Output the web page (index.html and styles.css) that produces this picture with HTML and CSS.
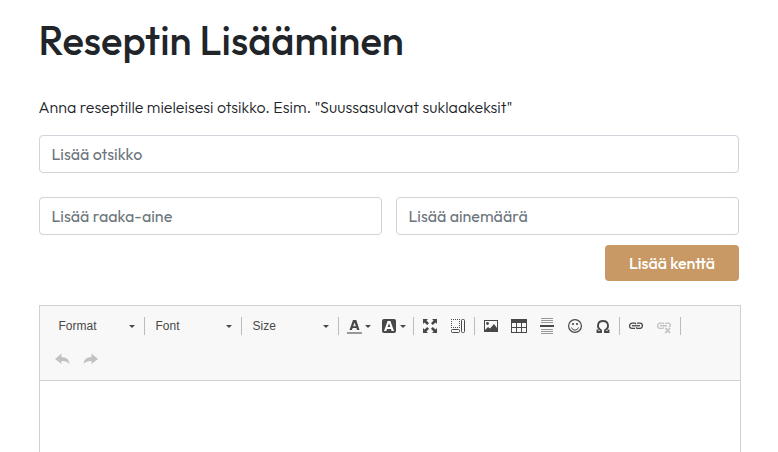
FILE: index.html
```html
<!DOCTYPE html>
<html lang="fi">
<head>
<meta charset="utf-8">
<title>Reseptin Lisääminen</title>
<link rel="stylesheet" href="styles.css">
</head>
<body>
<main class="page">
  <h1>Reseptin Lisääminen</h1>
  <p class="intro">Anna reseptille mieleisesi otsikko. Esim. "Suussasulavat suklaakeksit"</p>
  <input class="field title-field" placeholder="Lisää otsikko">
  <div class="row">
    <input class="field ingredient" placeholder="Lisää raaka-aine">
    <input class="field amount" placeholder="Lisää ainemäärä">
  </div>
  <button class="add">Lisää kenttä</button>
  <section class="editor">
    <div class="toolbar">
      <div class="tools">
        <span class="combo">Format<i class="caret"></i></span><i class="sep"></i>
        <span class="combo">Font<i class="caret"></i></span><i class="sep"></i>
        <span class="combo">Size<i class="caret"></i></span><i class="sep"></i>
        <span class="tool color"><svg viewBox="0 0 16 16"><path fill="#999" d="M0 14h15v2H0z"/><path fill="#484848" fill-rule="evenodd" d="M6 2h3.300L12.500 12h-2.500l-.6-2H5.600L5 12H2.500zM7.500 4.500 6.200 8.200h2.600z"/></svg><i class="caret"></i></span>
        <span class="tool color"><svg viewBox="0 0 16 16"><rect y="1" width="14" height="14" rx="2" fill="#484848"/><path fill="#fff" fill-rule="evenodd" d="M5.600 3h2.800L12 13H9.600L9 11H5l-.6 2H2zM7 5.200 5.600 9h2.800z"/></svg><i class="caret"></i></span><i class="sep"></i>
        <span class="tool"><svg viewBox="0 0 16 16"><path fill="#484848" d="M1 1h5L4.500 2.500 7 5.200 5.200 7 2.500 4.500 1 6zM15 1v5l-1.500-1.500L10.800 7 9 5.200l2.500-2.700L10 1zM1 15v-5l1.500 1.500L5.200 9 7 10.800 4.500 13.500 6 15zM15 15h-5l1.500-1.500L9 10.800 10.800 9l2.700 2.500L15 10z"/></svg></span>
        <span class="tool"><svg viewBox="0 0 16 16" fill="none" stroke="#484848"><path stroke-dasharray="1 1" d="M1 1.500h9M1.500 3v7M9.500 3v7M1 9.500h9"/><rect x="11.500" y="1.500" width="3" height="13" rx="1"/><rect x="1.500" y="11.500" width="8" height="3" rx="1"/></svg></span><i class="sep"></i>
        <span class="tool"><svg viewBox="0 0 16 16"><path fill="#484848" fill-rule="evenodd" d="M1 2h14v12H1zM2 3v10h12V3z"/><circle cx="4.500" cy="5.500" r="1.400" fill="#484848"/><path fill="#484848" d="m2 12 3-3 2 1.500L11 6l3 4v3H2z"/></svg></span>
        <span class="tool"><svg viewBox="0 0 16 16"><path fill="#484848" fill-rule="evenodd" d="M0 1h16v14H0zM1 5v4h4V5zm5 0v4h4V5zm5 0v4h4V5zM1 10v4h4v-4zm5 0v4h4v-4zm5 0v4h4v-4z"/></svg></span>
        <span class="tool"><svg viewBox="0 0 16 16"><path fill="#999" d="M2 0h12v1H2zM2 2h12v1H2zM2 4h12v1H2zM2 11h12v1H2zM2 13h12v1H2zM2 15h12v1H2z"/><path fill="#484848" d="M1 7h14v2H1z"/></svg></span>
        <span class="tool"><svg viewBox="0 0 16 16"><circle cx="8" cy="8" r="6.400" fill="none" stroke="#484848" stroke-width="1.200"/><path d="M4.500 9.500q1 2.700 3.500 2.700t3.500-2.700" fill="none" stroke="#484848"/><circle cx="6" cy="6" r="1.100" fill="#484848"/><circle cx="10" cy="6" r="1.100" fill="#484848"/></svg></span>
        <span class="tool"><svg viewBox="0 0 16 16"><path fill="none" stroke="#484848" stroke-width="1.900" d="M2.500 11.500V14H6v-1.700C1.300 9.500 2.300 3 8 3s6.700 6.500 2 9.300V14h3.500v-2.500"/></svg></span><i class="sep"></i>
        <span class="tool"><svg viewBox="0 0 16 16"><g fill="none" stroke="#484848" stroke-width="1.300"><path d="M7 10.300H4Q1.600 10.300 1.600 8T4 5.200h3l1 .8M9 5.200h3q2.400 0 2.400 2.500T12 10.300H9l-1-.8"/><path d="M4 7.750h8"/></g></svg></span>
        <span class="tool"><svg viewBox="0 0 16 16"><g fill="none" stroke="#c2c2c2" stroke-width="1.300"><path d="M7 10.300H4Q1.600 10.300 1.600 8T4 5.200h3l1 .8M9 5.200h3q2.400 0 2.400 2.500L13 9M4 7.750h7M7 10.300l1-.8"/><path stroke-width="1.800" d="m9.300 10 4.700 5m0-5-4.700 5"/></g></svg></span><i class="sep"></i>
      </div>
      <div class="tools history">
        <span class="tool"><svg viewBox="0 0 16 16"><path fill="#c2c2c2" d="M0 8l6.500-5.500V6Q14 6 14.500 13 11.500 9.700 6.500 10v3z"/></svg></span>
        <span class="tool"><svg viewBox="0 0 16 16"><path fill="#c2c2c2" d="M15 8 8.500 2.500V6Q1 6 .5 13 3.500 9.700 8.500 10v3z"/></svg></span>
      </div>
    </div>
    <div class="content"></div>
  </section>
</main>
</body>
</html>
```
FILE: styles.css
```css
* { box-sizing: border-box; }
body { margin: 0; background: #fff; color: #212529; font-family: Outfit, Lato, sans-serif; }
.page { display: flow-root; height: 452px; margin-left: 39px; width: 702px; }
h1 { margin: 16px 0 0 -0.5px; font-size: 40px; line-height: 48px; font-weight: 500; white-space: nowrap; }
.intro { margin: 31px 0 0 -0.5px; height: 24px; font-size: 16px; line-height: 24px; font-weight: 300; white-space: nowrap; }
.field { display: block; height: 38px; padding: 6px 12px 6px 11.500px; border: 1px solid #ced4da; border-radius: 4px; background: #fff; font: 400 16px/24px Outfit, Lato, sans-serif; outline: 0; }
.field::placeholder { color: #6c757d; opacity: 1; }
.title-field { width: 700px; margin-top: 16px; }
.row { display: flex; gap: 14px; margin-top: 24px; }
.row .field { width: 343px; }
.add { display: block; width: 134px; height: 36px; margin: 10px 2px 0 auto; padding: 0; border: 0; border-radius: 4px; background: #c89965; color: #fff; font: 500 16px/36px Outfit, Lato, sans-serif; }
.editor { margin-top: 24px; height: 147px; border: 1px solid #d1d1d1; border-bottom: 0; }
.toolbar { height: 75px; padding: 6px 0 0 10px; background: #f8f8f8; border-bottom: 1px solid #d1d1d1; }
.tools { display: flex; align-items: center; height: 28px; }
.history { margin: 5px 0 0 -1px; }
.combo { display: flex; align-items: center; justify-content: space-between; width: 92px; height: 28px; padding: 0 7px 0 8.500px; font: 12px/28px "Liberation Sans", Arial, sans-serif; color: #484848; }
.caret { flex: none; width: 0; height: 0; border: 3px solid transparent; border-top-color: #484848; border-bottom: 0; margin-top: 1px; }
.sep { flex: none; width: 1px; height: 18px; margin: 0 2px; background: #bcbcbc; }
.tool { flex: none; display: flex; align-items: center; width: 28px; height: 28px; padding-left: 6px; }
.tool svg { flex: none; width: 16px; height: 16px; }
.color { width: 35px; gap: 2px; }
```
